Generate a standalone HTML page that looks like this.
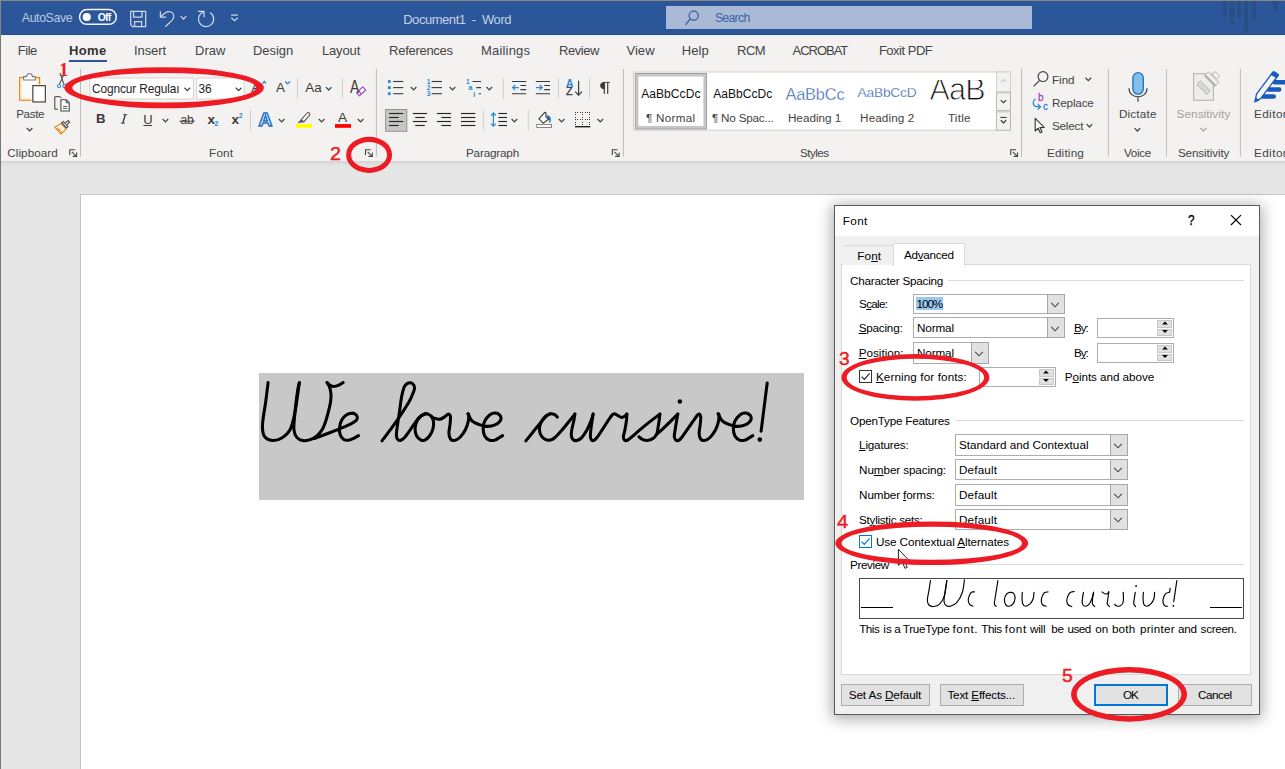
<!DOCTYPE html><html><head><meta charset="utf-8"><title>Word</title><style>html,body{margin:0;padding:0}body{width:1285px;height:769px;position:relative;overflow:hidden;background:#e6e6e6;font-family:"Liberation Sans",sans-serif}u{text-decoration:underline;text-underline-offset:1px;text-decoration-thickness:1px}svg{overflow:visible}</style></head><body>
<div style="position:absolute;left:80px;top:194px;width:1210px;height:580px;background:#fff;border:1px solid #c6c6c6"></div>
<div style="position:absolute;left:259px;top:373px;width:545px;height:127px;background:#c8c8c8"></div>
<svg style="position:absolute;left:0;top:0" width="1285" height="769" viewBox="0 0 1285 769"><g fill="none" stroke="#000" stroke-width="3.05" stroke-linecap="round" stroke-linejoin="round"><path d="M268.10 382.60 C267.68 385.90 266.54 395.39 265.60 402.44 C264.66 409.49 262.69 419.29 262.48 424.91 C262.27 430.52 262.69 433.54 264.35 436.14 C266.02 438.74 269.55 440.20 272.46 440.51 C275.38 440.82 278.91 439.78 281.83 438.01 C284.74 436.24 287.75 434.16 289.94 429.90 C292.12 425.63 293.37 420.27 294.93 412.43 C296.49 404.58 298.57 387.78 299.30 382.85"/><path d="M299.30 382.80 C299.05 383.93 298.38 386.02 297.80 389.60 C297.23 393.18 296.42 399.42 295.85 404.30 C295.28 409.18 294.72 414.68 294.40 418.90 C294.07 423.12 293.50 426.52 293.90 429.60 C294.30 432.68 295.33 435.57 296.80 437.40 C298.27 439.23 300.58 440.18 302.70 440.60 C304.82 441.02 307.23 440.58 309.50 439.90 C311.77 439.22 314.18 438.22 316.30 436.50 C318.42 434.78 320.57 432.37 322.20 429.60 C323.83 426.83 324.97 423.32 326.10 419.90 C327.23 416.48 328.27 412.03 329.00 409.10 C329.73 406.17 330.17 404.73 330.50 402.30 C330.83 399.87 331.17 397.10 331.00 394.50 C330.83 391.90 330.15 388.68 329.50 386.70 C328.85 384.72 327.48 383.28 327.07 382.60"/><path d="M327.07 382.60 C327.56 383.03 328.86 384.55 330.00 385.20 C331.14 385.85 332.43 386.50 333.90 386.50 C335.37 386.50 337.25 385.87 338.80 385.20 C340.35 384.53 342.47 382.95 343.20 382.50"/><path d="M314.40 438.49 C316.83 437.57 324.62 434.66 329.00 432.96 C333.38 431.26 337.12 429.77 340.70 428.29 C344.28 426.81 347.90 425.41 350.50 424.09 C353.10 422.78 355.17 421.54 356.30 420.38 C357.43 419.22 357.45 418.15 357.30 417.14 C357.15 416.13 356.37 414.99 355.40 414.32 C354.43 413.66 352.97 413.07 351.50 413.15 C350.03 413.22 348.23 413.63 346.60 414.75 C344.97 415.88 342.87 417.80 341.70 419.90 C340.53 422.00 339.85 424.86 339.60 427.34 C339.35 429.81 339.52 432.75 340.20 434.77 C340.88 436.79 342.32 438.54 343.70 439.44 C345.08 440.35 346.88 440.36 348.50 440.20 C350.12 440.05 351.73 439.25 353.40 438.49 C355.07 437.73 357.65 436.11 358.50 435.63"/><path d="M382.00 440.86 C383.43 438.94 387.75 433.24 390.60 429.34 C393.45 425.43 396.12 421.86 399.10 417.42 C402.08 412.98 406.38 406.22 408.50 402.69 C410.62 399.15 410.79 398.63 411.80 396.20 C412.81 393.77 414.42 390.20 414.55 388.10 C414.68 386.00 413.58 384.46 412.56 383.60 C411.54 382.75 409.77 382.54 408.44 382.97 C407.11 383.40 405.69 384.00 404.57 386.20 C403.45 388.40 402.48 392.45 401.70 396.20 C400.92 399.95 400.45 404.89 399.90 408.68 C399.35 412.47 398.92 415.38 398.40 418.95 C397.88 422.52 397.13 427.26 396.80 430.10 C396.47 432.94 396.20 434.41 396.40 436.01 C396.60 437.62 397.28 439.01 398.00 439.73 C398.72 440.44 399.60 440.67 400.70 440.30 C401.80 439.93 403.05 439.19 404.60 437.49 C406.15 435.79 408.32 432.44 410.00 430.10 C411.68 427.76 413.13 425.54 414.70 423.43 C416.27 421.31 417.84 418.97 419.40 417.42 C420.96 415.87 422.88 414.76 424.05 414.12 C425.22 413.48 426.01 413.67 426.40 413.58"/><path d="M426.40 413.58 C425.48 413.98 422.52 414.61 420.90 415.99 C419.27 417.38 417.62 419.68 416.65 421.90 C415.68 424.13 415.10 426.99 415.10 429.34 C415.10 431.69 415.68 434.22 416.65 436.01 C417.62 437.81 419.54 439.43 420.90 440.11 C422.26 440.79 423.37 440.79 424.80 440.11 C426.23 439.43 428.13 437.93 429.50 436.01 C430.87 434.09 432.35 431.05 433.00 428.58 C433.65 426.10 433.72 423.24 433.40 421.14 C433.07 419.04 432.08 417.22 431.05 415.99 C430.02 414.76 427.98 414.15 427.20 413.75 C426.42 413.34 426.53 413.61 426.40 413.58"/><path d="M431.50 416.37 C431.81 416.62 432.00 417.34 433.35 417.83 C434.70 418.32 437.75 419.44 439.57 419.32 C441.38 419.20 442.94 417.88 444.24 417.09 C445.55 416.30 446.57 415.03 447.40 414.56 C448.23 414.09 448.69 413.92 449.20 414.28 C449.71 414.64 450.32 415.07 450.47 416.72 C450.62 418.36 450.34 421.42 450.08 424.14 C449.82 426.86 448.85 430.56 448.91 433.04 C448.98 435.51 449.56 437.74 450.47 438.98 C451.38 440.21 452.80 440.72 454.36 440.47 C455.92 440.22 458.00 439.22 459.81 437.49 C461.62 435.75 463.82 432.79 465.25 430.07 C466.68 427.35 467.79 423.70 468.37 421.17 C468.95 418.63 468.81 416.10 468.75 414.87 C468.69 413.63 468.11 413.93 467.98 413.75"/><path d="M467.98 413.75 C468.69 414.98 470.25 419.31 472.26 421.17 C474.27 423.02 477.45 424.01 480.04 424.88 C482.63 425.74 485.33 426.36 487.82 426.36 C490.31 426.36 492.99 425.74 495.00 424.88 C497.01 424.01 498.90 422.40 499.90 421.17 C500.90 419.93 501.22 418.63 501.00 417.46 C500.78 416.29 499.70 414.86 498.60 414.12 C497.50 413.39 495.94 412.88 494.40 413.07 C492.86 413.26 491.00 413.89 489.38 415.24 C487.76 416.59 485.75 418.94 484.71 421.17 C483.67 423.39 483.15 426.12 483.15 428.59 C483.15 431.07 483.67 434.09 484.71 436.01 C485.75 437.93 487.69 439.41 489.38 440.09 C491.06 440.77 492.62 440.83 494.82 440.09 C497.02 439.35 501.31 436.38 502.61 435.64"/><path d="M525.84 440.86 C527.20 439.19 531.34 434.10 534.00 430.82 C536.66 427.53 539.72 423.61 541.80 421.14 C543.88 418.67 545.04 417.22 546.46 415.99 C547.88 414.76 549.05 414.00 550.35 413.75 C551.65 413.49 553.07 413.91 554.24 414.47 C555.41 415.02 556.83 416.65 557.35 417.09"/><path d="M550.35 413.75 C549.44 414.24 546.52 415.11 544.90 416.72 C543.27 418.33 541.51 421.17 540.60 423.40 C539.69 425.62 539.33 427.97 539.46 430.07 C539.59 432.17 540.36 434.40 541.40 436.01 C542.44 437.62 544.21 439.05 545.70 439.73 C547.19 440.41 548.80 440.46 550.35 440.09 C551.90 439.72 553.06 439.16 555.00 437.49 C556.94 435.82 559.53 432.91 562.00 430.07 C564.47 427.23 567.66 423.09 569.80 420.43 C571.94 417.78 574.02 415.18 574.86 414.12"/><path d="M574.86 414.12 C574.67 415.30 574.22 418.51 573.70 421.17 C573.18 423.83 572.14 427.60 571.75 430.07 C571.36 432.55 571.10 434.40 571.36 436.01 C571.62 437.62 572.39 438.98 573.30 439.73 C574.21 440.47 575.43 440.78 576.80 440.47 C578.17 440.16 579.82 439.59 581.50 437.86 C583.18 436.13 585.28 432.98 586.90 430.07 C588.52 427.17 590.16 423.09 591.20 420.43 C592.24 417.78 592.83 415.18 593.15 414.12"/><path d="M593.15 414.12 C592.96 415.30 592.39 418.51 592.00 421.17 C591.61 423.83 591.07 427.47 590.80 430.07 C590.53 432.67 590.27 435.08 590.40 436.75 C590.53 438.42 591.02 439.47 591.60 440.09 C592.18 440.71 593.00 440.90 593.90 440.47 C594.80 440.04 595.57 439.34 597.00 437.49 C598.43 435.63 600.55 432.30 602.50 429.34 C604.45 426.37 607.08 422.10 608.70 419.69 C610.32 417.28 611.24 415.86 612.20 414.87 C613.16 413.88 613.50 413.62 614.45 413.75 C615.40 413.87 616.67 414.99 617.90 415.61 C619.12 416.23 620.63 417.40 621.80 417.46 C622.97 417.52 624.06 416.55 624.90 415.99 C625.74 415.44 626.52 414.44 626.85 414.12"/><path d="M626.85 414.12 C626.79 415.18 626.79 417.78 626.46 420.43 C626.13 423.09 625.42 427.35 624.90 430.07 C624.38 432.79 623.42 435.08 623.35 436.75 C623.28 438.42 623.92 439.47 624.50 440.09 C625.08 440.71 625.75 440.90 626.85 440.47 C627.95 440.04 628.83 439.34 631.10 437.49 C633.37 435.63 637.22 432.06 640.47 429.34 C643.72 426.62 647.36 423.70 650.60 421.17 C653.84 418.63 658.35 415.30 659.90 414.12"/><path d="M659.90 414.12 C659.77 415.18 659.46 418.15 659.14 420.43 C658.82 422.72 658.37 425.63 657.98 427.85 C657.59 430.07 657.65 431.99 656.80 433.78 C655.95 435.57 654.45 437.47 652.90 438.58 C651.35 439.70 649.22 440.34 647.47 440.47 C645.72 440.60 643.83 439.97 642.40 439.35 C640.97 438.73 639.48 437.19 638.90 436.75"/><path d="M657.20 433.78 C658.04 433.04 660.12 431.32 662.26 429.34 C664.40 427.36 667.45 424.44 670.04 421.90 C672.63 419.37 676.51 415.42 677.80 414.12"/><path d="M677.80 414.12 C677.61 415.18 677.10 417.78 676.65 420.43 C676.20 423.09 675.49 427.35 675.10 430.07 C674.71 432.79 674.17 435.08 674.30 436.75 C674.43 438.42 675.25 439.45 675.90 440.09 C676.55 440.73 677.23 441.03 678.20 440.60 C679.17 440.17 679.82 439.86 681.70 437.49 C683.58 435.12 687.93 428.61 689.50 426.38 C691.07 424.15 689.79 425.95 691.10 424.09 C692.41 422.24 696.00 416.91 697.35 415.23 C698.70 413.55 698.65 413.74 699.20 413.99 C699.75 414.24 700.49 415.02 700.67 416.72 C700.85 418.41 700.54 421.42 700.28 424.14 C700.02 426.86 699.04 430.56 699.11 433.04 C699.18 435.51 699.76 437.74 700.67 438.98 C701.58 440.21 703.00 440.72 704.56 440.47 C706.12 440.22 708.19 439.22 710.01 437.49 C711.83 435.75 714.02 432.79 715.45 430.07 C716.88 427.35 717.99 423.70 718.57 421.17 C719.15 418.63 719.01 416.10 718.95 414.87 C718.89 413.63 718.31 413.93 718.18 413.75"/><path d="M718.18 413.75 C718.89 414.98 720.45 419.31 722.46 421.17 C724.47 423.02 727.65 424.01 730.24 424.88 C732.83 425.74 735.53 426.36 738.02 426.36 C740.51 426.36 743.19 425.74 745.20 424.88 C747.21 424.01 749.10 422.40 750.10 421.17 C751.10 419.93 751.42 418.63 751.20 417.46 C750.98 416.29 749.90 414.86 748.80 414.12 C747.70 413.39 746.14 412.88 744.60 413.07 C743.06 413.26 741.19 413.89 739.58 415.24 C737.96 416.59 735.95 418.94 734.91 421.17 C733.87 423.39 733.35 426.12 733.35 428.59 C733.35 431.07 733.87 434.09 734.91 436.01 C735.95 437.93 737.89 439.41 739.58 440.09 C741.26 440.77 742.81 440.83 745.02 440.09 C747.23 439.35 751.51 436.38 752.81 435.64"/><path d="M767.20 383.00 C766.18 391.02 762.12 423.12 761.10 431.15"/></g><circle cx="679.85" cy="401.40" r="2.25" fill="#000"/><circle cx="759.80" cy="439.60" r="2.30" fill="#000"/></svg>
<div style="position:absolute;left:0;top:0;width:1285px;height:35px;background:#2b579a"></div>
<div style="position:absolute;left:1px;top:34px;width:1284px;height:1px;background:#214d93"></div>
<svg style="position:absolute;left:1200px;top:1px" width="85" height="34" viewBox="1200 1 85 34"><g fill="#2b4e86"><rect x="1223" y="1" width="4" height="16"/><rect x="1230" y="1" width="4" height="23"/><rect x="1237" y="1" width="4" height="17"/><rect x="1244" y="1" width="4" height="32"/><rect x="1252" y="1" width="4" height="20"/><path d="M1271 1 L1278 1 L1278 15 Z"/></g></svg>
<span style="position:absolute;left:21.80px;top:12.10px;font:normal normal 12.40px/1 'Liberation Sans', sans-serif;color:#b9c7e0;letter-spacing:-0.418px;white-space:pre;">AutoSave</span>
<svg style="position:absolute;left:76px;top:6px" width="44" height="22" viewBox="76 6 44 22"><rect x="79.55" y="9.6" width="36.75" height="14.75" rx="7.4" fill="none" stroke="#f4f6fb" stroke-width="1.5"/><circle cx="86.75" cy="17" r="4.1" fill="#fff"/></svg>
<span style="position:absolute;left:97.70px;top:12.60px;font:normal bold 10.40px/1 'Liberation Sans', sans-serif;color:#fff;letter-spacing:-0.726px;white-space:pre;">Off</span>
<svg style="position:absolute;left:125px;top:5px" width="120" height="26" viewBox="125 5 120 26" fill="none" stroke="#cbd6e8" stroke-width="1.25">
<path d="M130.7 11.4 H145.7 V26.7 H132.6 L130.7 24.8 Z"/><path d="M133.6 11.4 V17 H142 V11.4"/><path d="M134.6 26.7 V21.6 H141.6 V26.7"/>
<path d="M160.4 11.3 V17.2 H166.1"/><path d="M160.6 17 C164 13 167.6 10.6 171.2 12 C174.4 13.4 174.6 17.6 172 20.4 L165.3 26.8"/>
<path d="M180.7 16.1 L183.5 19 L186.3 16.1"/>
<path d="M197.9 11.4 H204 V17.3"/><path d="M210.03 12.50 A7.60 7.60 0 1 1 203.60 11.80"/>
<path d="M231.1 15.1 H237.9"/><path d="M231.3 17.7 L234.5 20.7 L237.8 17.7"/>
</svg>
<span style="position:absolute;left:403.20px;top:13.20px;font:normal normal 13.00px/1 'Liberation Sans', sans-serif;color:#c5d1e6;letter-spacing:-0.457px;white-space:pre;">Document1  -  Word</span>
<div style="position:absolute;left:665.6px;top:6.4px;width:366.6px;height:23px;background:#a8bad6"></div>
<svg style="position:absolute;left:683px;top:8px" width="18" height="19" viewBox="683 8 18 19" fill="none" stroke="#3b63a5" stroke-width="1.3"><circle cx="693.7" cy="15.6" r="4.6"/><path d="M690.5 19 L685.3 24.8"/></svg>
<span style="position:absolute;left:714.90px;top:11.79px;font:normal normal 12.30px/1 'Liberation Sans', sans-serif;color:#3b63a5;letter-spacing:-0.722px;white-space:pre;">Search</span>
<div style="position:absolute;left:0;top:35px;width:1285px;height:126px;background:#f3f2f1"></div>
<div style="position:absolute;left:0;top:161px;width:1285px;height:6px;background:linear-gradient(#d2d2d2,#dedede 40%,#e6e6e6)"></div>
<span style="position:absolute;left:17.70px;top:44.20px;font:normal normal 13.00px/1 'Liberation Sans', sans-serif;color:#444;letter-spacing:-0.444px;white-space:pre;">File</span>
<span style="position:absolute;left:134.00px;top:44.20px;font:normal normal 13.00px/1 'Liberation Sans', sans-serif;color:#444;letter-spacing:-0.076px;white-space:pre;">Insert</span>
<span style="position:absolute;left:195.00px;top:44.20px;font:normal normal 13.00px/1 'Liberation Sans', sans-serif;color:#444;letter-spacing:0.016px;white-space:pre;">Draw</span>
<span style="position:absolute;left:253.00px;top:44.20px;font:normal normal 13.00px/1 'Liberation Sans', sans-serif;color:#444;letter-spacing:-0.067px;white-space:pre;">Design</span>
<span style="position:absolute;left:321.90px;top:44.20px;font:normal normal 13.00px/1 'Liberation Sans', sans-serif;color:#444;letter-spacing:-0.118px;white-space:pre;">Layout</span>
<span style="position:absolute;left:389.10px;top:44.20px;font:normal normal 13.00px/1 'Liberation Sans', sans-serif;color:#444;letter-spacing:-0.283px;white-space:pre;">References</span>
<span style="position:absolute;left:481.00px;top:44.20px;font:normal normal 13.00px/1 'Liberation Sans', sans-serif;color:#444;letter-spacing:0.188px;white-space:pre;">Mailings</span>
<span style="position:absolute;left:559.00px;top:44.20px;font:normal normal 13.00px/1 'Liberation Sans', sans-serif;color:#444;letter-spacing:-0.423px;white-space:pre;">Review</span>
<span style="position:absolute;left:626.40px;top:44.20px;font:normal normal 13.00px/1 'Liberation Sans', sans-serif;color:#444;letter-spacing:0.071px;white-space:pre;">View</span>
<span style="position:absolute;left:681.70px;top:44.20px;font:normal normal 13.00px/1 'Liberation Sans', sans-serif;color:#444;letter-spacing:0.129px;white-space:pre;">Help</span>
<span style="position:absolute;left:737.00px;top:44.20px;font:normal normal 13.00px/1 'Liberation Sans', sans-serif;color:#444;letter-spacing:-0.484px;white-space:pre;">RCM</span>
<span style="position:absolute;left:792.50px;top:44.20px;font:normal normal 13.00px/1 'Liberation Sans', sans-serif;color:#444;letter-spacing:-1.014px;white-space:pre;">ACROBAT</span>
<span style="position:absolute;left:878.90px;top:44.20px;font:normal normal 13.00px/1 'Liberation Sans', sans-serif;color:#444;letter-spacing:-0.494px;white-space:pre;">Foxit PDF</span>
<span style="position:absolute;left:69.00px;top:44.20px;font:normal bold 13.00px/1 'Liberation Sans', sans-serif;color:#333;letter-spacing:0.336px;white-space:pre;">Home</span>
<div style="position:absolute;left:69.2px;top:59.6px;width:37.7px;height:2.9px;background:#2b579a"></div>
<span style="position:absolute;left:7.30px;top:146.70px;font:normal normal 11.70px/1 'Liberation Sans', sans-serif;color:#444;letter-spacing:0.055px;white-space:pre;">Clipboard</span>
<span style="position:absolute;left:209.10px;top:146.70px;font:normal normal 11.70px/1 'Liberation Sans', sans-serif;color:#444;letter-spacing:0.174px;white-space:pre;">Font</span>
<span style="position:absolute;left:466.00px;top:146.70px;font:normal normal 11.70px/1 'Liberation Sans', sans-serif;color:#444;letter-spacing:-0.176px;white-space:pre;">Paragraph</span>
<span style="position:absolute;left:799.90px;top:146.70px;font:normal normal 11.70px/1 'Liberation Sans', sans-serif;color:#444;letter-spacing:-0.514px;white-space:pre;">Styles</span>
<span style="position:absolute;left:1046.90px;top:146.70px;font:normal normal 11.70px/1 'Liberation Sans', sans-serif;color:#444;letter-spacing:0.208px;white-space:pre;">Editing</span>
<span style="position:absolute;left:1123.90px;top:146.70px;font:normal normal 11.70px/1 'Liberation Sans', sans-serif;color:#444;letter-spacing:-0.332px;white-space:pre;">Voice</span>
<span style="position:absolute;left:1177.90px;top:146.70px;font:normal normal 11.70px/1 'Liberation Sans', sans-serif;color:#444;letter-spacing:-0.107px;white-space:pre;">Sensitivity</span>
<span style="position:absolute;left:1253.90px;top:146.70px;font:normal normal 11.70px/1 'Liberation Sans', sans-serif;color:#444;letter-spacing:0.464px;white-space:pre;">Editor</span>
<svg style="position:absolute;left:0;top:0" width="1285" height="170" viewBox="0 0 1285 170"><path d="M80.5 69 V156.8" stroke="#bdbcbb" stroke-width="1"/>
<path d="M376.4 69 V156.8" stroke="#bdbcbb" stroke-width="1"/>
<path d="M623.4 69 V156.8" stroke="#bdbcbb" stroke-width="1"/>
<path d="M1021.5 69 V156.8" stroke="#bdbcbb" stroke-width="1"/>
<path d="M1108.4 69 V156.8" stroke="#bdbcbb" stroke-width="1"/>
<path d="M1166.4 69 V156.8" stroke="#bdbcbb" stroke-width="1"/>
<path d="M1240.4 69 V156.8" stroke="#bdbcbb" stroke-width="1"/>
<path d="M297.5 78.3 V98.6" stroke="#d0cfce" stroke-width="1"/>
<path d="M342.4 78.3 V98.6" stroke="#d0cfce" stroke-width="1"/>
<path d="M503.4 78.3 V98.6" stroke="#d0cfce" stroke-width="1"/>
<path d="M558.4 78.3 V98.6" stroke="#d0cfce" stroke-width="1"/>
<path d="M589.5 78.3 V98.6" stroke="#d0cfce" stroke-width="1"/>
<path d="M250.5 110.2 V130.6" stroke="#d0cfce" stroke-width="1"/>
<path d="M483.4 110.2 V130.6" stroke="#d0cfce" stroke-width="1"/>
<path d="M528.4 110.2 V130.6" stroke="#d0cfce" stroke-width="1"/>
<g fill="none" stroke="#444" stroke-width="1.1"><path d="M69.80 154.90 V149.80 H75.10"/><path d="M71.90 151.90 L76.50 156.30"/><path d="M76.60 152.50 V156.40 H72.70"/></g>
<g fill="none" stroke="#444" stroke-width="1.1"><path d="M365.50 154.90 V149.80 H370.80"/><path d="M367.60 151.90 L372.20 156.30"/><path d="M372.30 152.50 V156.40 H368.40"/></g>
<g fill="none" stroke="#444" stroke-width="1.1"><path d="M612.30 154.90 V149.80 H617.60"/><path d="M614.40 151.90 L619.00 156.30"/><path d="M619.10 152.50 V156.40 H615.20"/></g>
<g fill="none" stroke="#444" stroke-width="1.1"><path d="M1010.70 154.90 V149.80 H1016.00"/><path d="M1012.80 151.90 L1017.40 156.30"/><path d="M1017.50 152.50 V156.40 H1013.60"/></g>
<rect x="19.7" y="77.6" width="19.8" height="22.6" fill="#fbfaf8" stroke="#e08a1e" stroke-width="1.3"/>
<rect x="21" y="78.9" width="17.2" height="20" fill="none" stroke="#fbdfae" stroke-width="1.2"/>
<path d="M23.6 80 V76.6 H26.6 C26.8 72.4 32.2 72.4 32.4 76.6 H35.3 V80 Z" fill="#fff" stroke="#7c7c7c" stroke-width="1.1"/>
<rect x="31.4" y="84.2" width="15.4" height="19.2" fill="#f8f7f6"/>
<rect x="32.85" y="85.65" width="12.5" height="16.3" fill="#fff" stroke="#3a3a3a" stroke-width="1.15"/>
<path d="M26.80 127.95 L29.60 130.85 L32.40 127.95" fill="none" stroke="#444" stroke-width="1.25"/>
<path d="M59.9 73 L64 84.2 M64.6 73 L59.4 84.2" stroke="#555" stroke-width="1.1" fill="none"/>
<circle cx="59" cy="86.1" r="1.55" fill="#fff" stroke="#2b88d8" stroke-width="1.1"/><circle cx="64.4" cy="86.1" r="1.55" fill="#fff" stroke="#2b88d8" stroke-width="1.1"/>
<path d="M58 109.2 H54.8 V96.7 H60.2 L61.6 98.2" fill="none" stroke="#3b3a39" stroke-width="1"/>
<path d="M60.9 99.7 H66.4 L69.2 102.6 V111 H60.9 Z" fill="#fff" stroke="#444" stroke-width="1.1"/><path d="M66.2 99.9 V102.8 H69" fill="none" stroke="#444" stroke-width="1"/><path d="M63 106.4 H67.2 M63 108.4 H67.2" stroke="#444" stroke-width="0.9"/>
<path d="M54.8 127.2 L61.2 123.4 L66 129.2 L61 134.2 Z" fill="#fdf1e0" stroke="#e08a1e" stroke-width="1.2" stroke-linejoin="round"/><path d="M57 128.6 C59 129 61.4 131 61.2 133" fill="none" stroke="#e9a04a" stroke-width="1.6"/>
<path d="M61.8 122.6 L63.4 121.4 L67.9 126.6 L66.4 127.9 Z" fill="#fff" stroke="#444" stroke-width="1.1"/><path d="M65.2 123.2 L68.2 120.5 L69.6 122.1 L66.7 124.8" fill="#fff" stroke="#444" stroke-width="1.1"/>
<rect x="90" y="78" width="103.5" height="21" fill="#fff" stroke="#d6d4d2" stroke-width="1"/>
<rect x="196.7" y="78" width="47.4" height="21" fill="#fff" stroke="#d6d4d2" stroke-width="1"/>
<path d="M184.50 87.75 L187.30 90.65 L190.10 87.75" fill="none" stroke="#444" stroke-width="1.25"/>
<path d="M235.80 87.75 L238.60 90.65 L241.40 87.75" fill="none" stroke="#444" stroke-width="1.25"/>
<path d="M162.60 118.95 L165.40 121.85 L168.20 118.95" fill="none" stroke="#444" stroke-width="1.25"/>
<path d="M325.90 87.15 L328.70 90.05 L331.50 87.15" fill="none" stroke="#444" stroke-width="1.25"/>
<path d="M278.90 118.95 L281.70 121.85 L284.50 118.95" fill="none" stroke="#444" stroke-width="1.25"/>
<path d="M318.80 118.95 L321.60 121.85 L324.40 118.95" fill="none" stroke="#444" stroke-width="1.25"/>
<path d="M357.80 118.95 L360.60 121.85 L363.40 118.95" fill="none" stroke="#444" stroke-width="1.25"/>
<path d="M262.6 83.6 L264.3 81.3 L266 83.6" fill="none" stroke="#2b88d8" stroke-width="1.2"/>
<path d="M285.2 81.5 L287.6 83.8 L290 81.5" fill="none" stroke="#2b88d8" stroke-width="1.2"/>
<path d="M123.3 114.7 H127.2 M120.9 123.1 H124.8" stroke="#3b3a39" stroke-width="1"/><path d="M125.3 114.7 L122.8 123.1" stroke="#3b3a39" stroke-width="1.35"/>
<path d="M143.4 125.5 H152" stroke="#444" stroke-width="1.1"/>
<path d="M179.4 121.2 H194.8" stroke="#444" stroke-width="1"/>
<path d="M356.5 92.7 L362.8 86.9 L365.7 90.2 L359.4 95.8 Z" fill="#fff" stroke="#a349c0" stroke-width="1.2" stroke-linejoin="round"/><path d="M358.7 90.7 L361.5 94" stroke="#a349c0" stroke-width="1.1"/>
<path d="M301.2 119.6 L307.2 113 C308.4 111.9 310.6 113.8 309.6 115.2 L303.8 121.8 Z" fill="#fff" stroke="#555" stroke-width="1.1" stroke-linejoin="round"/><path d="M301.2 119.6 L303.8 121.8 L298.2 122.7 Z" fill="#555" stroke="#555" stroke-width="0.8"/>
<rect x="295.9" y="124.1" width="16.1" height="3.7" fill="#ffff00"/>
<rect x="335" y="124.1" width="16" height="3.7" fill="#ff0000"/>
<rect x="387.9" y="80.1" width="2.8" height="2.8" fill="#2b88d8"/>
<path d="M393.2 81.5 H403.3" stroke="#3b3a39" stroke-width="1.1"/>
<path d="M431.6 81.5 H442" stroke="#3b3a39" stroke-width="1.1"/>
<rect x="387.9" y="86.2" width="2.8" height="2.8" fill="#2b88d8"/>
<path d="M393.2 87.6 H403.3" stroke="#3b3a39" stroke-width="1.1"/>
<path d="M431.6 87.6 H442" stroke="#3b3a39" stroke-width="1.1"/>
<rect x="387.9" y="92.3" width="2.8" height="2.8" fill="#2b88d8"/>
<path d="M393.2 93.7 H403.3" stroke="#3b3a39" stroke-width="1.1"/>
<path d="M431.6 93.7 H442" stroke="#3b3a39" stroke-width="1.1"/>
<path d="M410.80 86.95 L413.60 89.85 L416.40 86.95" fill="none" stroke="#444" stroke-width="1.25"/>
<path d="M449.70 86.95 L452.50 89.85 L455.30 86.95" fill="none" stroke="#444" stroke-width="1.25"/>
<path d="M486.50 86.95 L489.30 89.85 L492.10 86.95" fill="none" stroke="#444" stroke-width="1.25"/>
<path d="M472.4 81.5 H481 M476.3 87.6 H481 M478.6 93.7 H481" stroke="#3b3a39" stroke-width="1.1"/>
<path d="M512.0 81.5 H526.2 M520.4 85.5 H526.2 M520.4 89.6 H526.2 M512.0 93.7 H526.2" stroke="#3b3a39" stroke-width="1.1"/>
<path d="M535.8 81.5 H550.0 M544.2 85.5 H550.0 M544.2 89.6 H550.0 M535.8 93.7 H550.0" stroke="#3b3a39" stroke-width="1.1"/>
<path d="M518.8 87.6 H512.6 M515.2 85 L512.6 87.6 L515.2 90.2" fill="none" stroke="#2b88d8" stroke-width="1.2"/>
<path d="M536 87.6 H542.2 M539.6 85 L542.2 87.6 L539.6 90.2" fill="none" stroke="#2b88d8" stroke-width="1.2"/>
<path d="M578.6 80.8 V95 M575.2 91.6 L578.6 95.2 L582 91.6" fill="none" stroke="#3b3a39" stroke-width="1.2"/>
<path d="M604.8 82 C598.6 81.6 598.6 89.6 604.8 89.3 Z" fill="#3b3a39"/><path d="M604.3 82 V94 M607.7 82 V94" stroke="#3b3a39" stroke-width="1.15"/><path d="M603.5 82.4 H610.1" stroke="#3b3a39" stroke-width="0.9"/>
<rect x="385.6" y="109.5" width="21.2" height="21.8" fill="#c8c6c4" stroke="#979593" stroke-width="1"/>
<path d="M389.0 113.5 H403.2" stroke="#262626" stroke-width="1.15"/><path d="M389.0 117.5 H398.8" stroke="#262626" stroke-width="1.15"/><path d="M389.0 121.5 H403.2" stroke="#262626" stroke-width="1.15"/><path d="M389.0 125.5 H398.8" stroke="#262626" stroke-width="1.15"/>
<path d="M412.8 113.5 H427.1" stroke="#262626" stroke-width="1.15"/><path d="M415.2 117.5 H424.8" stroke="#262626" stroke-width="1.15"/><path d="M412.8 121.5 H427.1" stroke="#262626" stroke-width="1.15"/><path d="M415.2 125.5 H424.8" stroke="#262626" stroke-width="1.15"/>
<path d="M436.9 113.5 H451.1" stroke="#262626" stroke-width="1.15"/><path d="M441.3 117.5 H451.1" stroke="#262626" stroke-width="1.15"/><path d="M436.9 121.5 H451.1" stroke="#262626" stroke-width="1.15"/><path d="M441.3 125.5 H451.1" stroke="#262626" stroke-width="1.15"/>
<path d="M461.0 113.5 H475.4" stroke="#262626" stroke-width="1.15"/><path d="M461.0 117.5 H475.4" stroke="#262626" stroke-width="1.15"/><path d="M461.0 121.5 H475.4" stroke="#262626" stroke-width="1.15"/><path d="M461.0 125.5 H475.4" stroke="#262626" stroke-width="1.15"/>
<path d="M498.4 113.5 H507.0" stroke="#262626" stroke-width="1.15"/><path d="M498.4 117.5 H507.0" stroke="#262626" stroke-width="1.15"/><path d="M498.4 121.5 H507.0" stroke="#262626" stroke-width="1.15"/><path d="M498.4 125.5 H507.0" stroke="#262626" stroke-width="1.15"/>
<path d="M493.4 113 V126.2 M491 115.6 L493.4 113 L495.8 115.6 M491 123.6 L493.4 126.2 L495.8 123.6" fill="none" stroke="#2b88d8" stroke-width="1.2"/>
<path d="M511.60 118.95 L514.40 121.85 L517.20 118.95" fill="none" stroke="#444" stroke-width="1.25"/>
<path d="M558.80 118.95 L561.60 121.85 L564.40 118.95" fill="none" stroke="#444" stroke-width="1.25"/>
<path d="M597.50 118.95 L600.30 121.85 L603.10 118.95" fill="none" stroke="#444" stroke-width="1.25"/>
<path d="M538.95 118.8 L544.3 112.8 Q545.3 111.9 545.95 113.1 V116.85 L548.6 119.2 L543.2 123.1 Z" fill="#fff" stroke="#3b3a39" stroke-width="1.15" stroke-linejoin="round"/>
<path d="M547.5 115.6 C550.2 116 551.6 119.2 549.7 122.6 C549.7 120.2 549 118.2 547 117.3 Z" fill="#1e6fc1" stroke="#1e6fc1" stroke-width="0.6" stroke-linejoin="round"/>
<rect x="536.7" y="124.5" width="14.8" height="3" fill="#fff" stroke="#8a8886" stroke-width="1"/>
<rect x="585.00" y="119.00" width="1" height="1" fill="#3b3a39"/><rect x="587.00" y="119.00" width="1" height="1" fill="#3b3a39"/><rect x="575.00" y="114.00" width="1" height="1" fill="#3b3a39"/><rect x="575.00" y="117.00" width="1" height="1" fill="#3b3a39"/><rect x="589.00" y="119.00" width="1" height="1" fill="#3b3a39"/><rect x="589.00" y="122.00" width="1" height="1" fill="#3b3a39"/><rect x="580.00" y="119.00" width="1" height="1" fill="#3b3a39"/><rect x="582.00" y="119.00" width="1" height="1" fill="#3b3a39"/><rect x="585.00" y="112.00" width="1" height="1" fill="#3b3a39"/><rect x="582.00" y="122.00" width="1" height="1" fill="#3b3a39"/><rect x="587.00" y="112.00" width="1" height="1" fill="#3b3a39"/><rect x="575.00" y="119.00" width="1" height="1" fill="#3b3a39"/><rect x="589.00" y="112.00" width="1" height="1" fill="#3b3a39"/><rect x="575.00" y="122.00" width="1" height="1" fill="#3b3a39"/><rect x="580.00" y="112.00" width="1" height="1" fill="#3b3a39"/><rect x="577.00" y="119.00" width="1" height="1" fill="#3b3a39"/><rect x="589.00" y="124.00" width="1" height="1" fill="#3b3a39"/><rect x="582.00" y="112.00" width="1" height="1" fill="#3b3a39"/><rect x="582.00" y="124.00" width="1" height="1" fill="#3b3a39"/><rect x="575.00" y="112.00" width="1" height="1" fill="#3b3a39"/><rect x="577.00" y="112.00" width="1" height="1" fill="#3b3a39"/><rect x="589.00" y="114.00" width="1" height="1" fill="#3b3a39"/><rect x="589.00" y="117.00" width="1" height="1" fill="#3b3a39"/><rect x="575.00" y="124.00" width="1" height="1" fill="#3b3a39"/><rect x="582.00" y="114.00" width="1" height="1" fill="#3b3a39"/><rect x="582.00" y="117.00" width="1" height="1" fill="#3b3a39"/>
<path d="M575 126.7 H590.3" stroke="#1f1f1f" stroke-width="1.4"/>
<rect x="633.5" y="72" width="377" height="58.2" fill="#fff" stroke="#d2d0ce" stroke-width="1"/>
<rect x="636.8" y="74.9" width="68.2" height="52.6" fill="#fff" stroke="#c8c6c4" stroke-width="3.2"/><rect x="635.3" y="73.4" width="71.2" height="55.6" fill="none" stroke="#9d9b99" stroke-width="0.9"/>
<rect x="996.5" y="72" width="14" height="19.6" fill="#f3f2f1" stroke="#d2d0ce" stroke-width="1"/><rect x="996.5" y="92.8" width="14" height="17.6" fill="#f3f2f1" stroke="#bab8b6" stroke-width="1"/><rect x="996.5" y="111.8" width="14" height="18.4" fill="#f3f2f1" stroke="#bab8b6" stroke-width="1"/>
<path d="M1000.90 82.10 L1003.50 79.50 L1006.10 82.10" fill="none" stroke="#c8c6c4" stroke-width="1.10"/>
<path d="M1000.80 100.05 L1003.50 102.75 L1006.20 100.05" fill="none" stroke="#333" stroke-width="1.10"/>
<path d="M1000.80 120.25 L1003.50 122.95 L1006.20 120.25" fill="none" stroke="#333" stroke-width="1.10"/>
<path d="M1000.4 117.4 H1006.6" stroke="#333" stroke-width="1"/>
<circle cx="1043" cy="76.6" r="4.9" fill="none" stroke="#444" stroke-width="1.2"/><path d="M1039.6 80.4 L1033.6 86.4" stroke="#444" stroke-width="1.3"/>
<path d="M1085.50 77.75 L1088.30 80.65 L1091.10 77.75" fill="none" stroke="#444" stroke-width="1.25"/>
<path d="M1086.60 124.15 L1089.40 127.05 L1092.20 124.15" fill="none" stroke="#444" stroke-width="1.25"/>
<path d="M1035.2 118.4 V131 L1038.2 128.2 L1040.2 132.8 L1042 132 L1040 127.6 L1044.2 127.4 Z" fill="#fff" stroke="#333" stroke-width="1.1" stroke-linejoin="round"/>
<path d="M1035.6 98.7 C1032.4 100.4 1032.4 105.4 1035.8 106.6 L1040.3 106.7 M1037.7 103.9 L1040.5 106.7 L1037.7 109.5" fill="none" stroke="#2b88d8" stroke-width="1.25"/>
<rect x="1132.9" y="72.6" width="10.4" height="21.6" rx="5.2" fill="#83beec" stroke="#1e6fc1" stroke-width="1.3"/>
<path d="M1129 88.2 C1129 99.6 1147 99.6 1147 88.2 M1138 96.8 V101.8" fill="none" stroke="#444" stroke-width="1.2"/>
<path d="M1134.60 128.15 L1137.40 131.05 L1140.20 128.15" fill="none" stroke="#444" stroke-width="1.25"/>
<rect x="1193.6" y="73.7" width="19.8" height="26.6" fill="#eeeded" stroke="#b9b8b7" stroke-width="1.2"/>
<rect x="1201.30" y="80.95" width="4.60" height="13.40" fill="#eeeded" stroke="#b9b8b7" stroke-width="1.10" transform="rotate(-45 1203.60 87.65)" />
<rect x="1202.90" y="82.95" width="1.40" height="9.40" fill="#f6f5f4" stroke="#b9b8b7" stroke-width="0.80" transform="rotate(-45 1203.60 87.65)" />
<rect x="1209.16" y="71.57" width="5.20" height="14.80" fill="#f0efee" stroke="#c4c3c2" stroke-width="1.00" transform="rotate(-45 1211.76 78.97)" />
<rect x="1209.05" y="73.20" width="2.10" height="14.80" fill="#adacab" stroke="none" stroke-width="0.00" transform="rotate(-45 1210.10 80.60)" />
<rect x="1213.85" y="71.90" width="3.90" height="6.60" fill="#f6f5f4" stroke="#c4c3c2" stroke-width="1.00" transform="rotate(-45 1215.80 75.20)" />
<path d="M1200.40 127.90 L1203.40 130.90 L1206.40 127.90" fill="none" stroke="#a19f9d" stroke-width="1.20"/>
<path d="M1274.8 82.3 H1290 M1268.4 89.5 H1279.2 M1262.6 96.4 H1273.8" stroke="#185abd" stroke-width="4.5" stroke-linecap="round"/>
<path d="M1254.9 101.8 L1256.5 94.2 L1272.6 72.6 Q1273.5 71.4 1274.8 72.3 L1278.4 75 L1260.6 98.6 Z" fill="#f7f6f5" stroke="#185abd" stroke-width="1.3" stroke-linejoin="round"/>
<path d="M1271.3 74.4 L1272.6 72.6 Q1273.5 71.4 1274.8 72.3 L1278.4 75 L1276.4 77.6 Z" fill="#185abd" stroke="#185abd" stroke-width="1.2" stroke-linejoin="round"/>
<path d="M1254.8 101.9 L1256.1 98 L1258.7 100.3 Z" fill="#185abd" stroke="#185abd" stroke-width="0.8" stroke-linejoin="round"/></svg>
<span style="position:absolute;left:16.20px;top:107.80px;font:normal normal 11.70px/1 'Liberation Sans', sans-serif;color:#444;letter-spacing:-0.376px;white-space:pre;">Paste</span>
<span style="position:absolute;left:92.10px;top:83.53px;font:normal normal 11.90px/1 'Liberation Sans', sans-serif;color:#1d1d1d;letter-spacing:-0.127px;white-space:pre;">Cogncur Regulaı</span>
<span style="position:absolute;left:198.50px;top:83.53px;font:normal normal 11.90px/1 'Liberation Sans', sans-serif;color:#1d1d1d;letter-spacing:-0.156px;white-space:pre;">36</span>
<span style="position:absolute;left:96.10px;top:112.43px;font:normal bold 13.20px/1 'Liberation Sans', sans-serif;color:#3b3a39;letter-spacing:-1.131px;white-space:pre;">B</span>
<span style="position:absolute;left:143.20px;top:112.60px;font:normal normal 13.00px/1 'Liberation Sans', sans-serif;color:#3b3a39;letter-spacing:-0.891px;white-space:pre;">U</span>
<span style="position:absolute;left:180.50px;top:114.44px;font:normal normal 12.00px/1 'Liberation Sans', sans-serif;color:#3b3a39;letter-spacing:-0.240px;white-space:pre;">ab</span>
<span style="position:absolute;left:207.50px;top:112.87px;font:normal bold 13.50px/1 'Liberation Sans', sans-serif;color:#3b3a39;letter-spacing:-0.116px;white-space:pre;">x</span>
<span style="position:absolute;left:214.45px;top:121.44px;font:normal bold 6.80px/1 'Liberation Sans', sans-serif;color:#2b88d8;letter-spacing:0.119px;white-space:pre;">2</span>
<span style="position:absolute;left:231.50px;top:112.87px;font:normal bold 13.50px/1 'Liberation Sans', sans-serif;color:#3b3a39;letter-spacing:-0.116px;white-space:pre;">x</span>
<span style="position:absolute;left:238.65px;top:112.84px;font:normal bold 6.80px/1 'Liberation Sans', sans-serif;color:#2b88d8;letter-spacing:0.119px;white-space:pre;">2</span>
<span style="position:absolute;left:251.30px;top:81.19px;font:normal normal 13.60px/1 'Liberation Sans', sans-serif;color:#3b3a39;letter-spacing:0.722px;white-space:pre;">A</span>
<span style="position:absolute;left:276.10px;top:81.36px;font:normal normal 13.40px/1 'Liberation Sans', sans-serif;color:#3b3a39;letter-spacing:0.962px;white-space:pre;">A</span>
<span style="position:absolute;left:305.20px;top:81.36px;font:normal normal 13.40px/1 'Liberation Sans', sans-serif;color:#3b3a39;letter-spacing:0.206px;white-space:pre;">Aa</span>
<span style="position:absolute;left:350.10px;top:79.10px;font:normal normal 17.60px/1 'Liberation Sans', sans-serif;color:#3b3a39;letter-spacing:0.000px;white-space:pre;transform:scaleX(0.7915);transform-origin:0 0;">A</span>
<span style="position:absolute;left:258.40px;top:110.12px;font:normal bold 19.00px/1 'Liberation Sans', sans-serif;color:#fff;letter-spacing:1.966px;white-space:pre;-webkit-text-stroke:1.5px #1e73c8;">A</span>
<span style="position:absolute;left:338.10px;top:110.70px;font:normal normal 13.70px/1 'Liberation Sans', sans-serif;color:#3b3a39;letter-spacing:1.459px;white-space:pre;">A</span>
<span style="position:absolute;left:426.70px;top:78.61px;font:normal bold 6.60px/1 'Liberation Sans', sans-serif;color:#2b88d8;letter-spacing:-0.472px;white-space:pre;">1</span>
<span style="position:absolute;left:426.70px;top:84.71px;font:normal bold 6.60px/1 'Liberation Sans', sans-serif;color:#2b88d8;letter-spacing:-0.472px;white-space:pre;">2</span>
<span style="position:absolute;left:426.70px;top:90.81px;font:normal bold 6.60px/1 'Liberation Sans', sans-serif;color:#2b88d8;letter-spacing:-0.472px;white-space:pre;">3</span>
<span style="position:absolute;left:465.90px;top:78.61px;font:normal bold 6.60px/1 'Liberation Sans', sans-serif;color:#2b88d8;letter-spacing:-0.672px;white-space:pre;">1</span>
<span style="position:absolute;left:468.50px;top:84.47px;font:normal bold 7.00px/1 'Liberation Sans', sans-serif;color:#2b88d8;letter-spacing:-0.306px;white-space:pre;">a</span>
<span style="position:absolute;left:473.30px;top:90.67px;font:normal bold 7.00px/1 'Liberation Sans', sans-serif;color:#2b88d8;letter-spacing:-0.353px;white-space:pre;">i</span>
<span style="position:absolute;left:565.80px;top:77.93px;font:normal bold 10.60px/1 'Liberation Sans', sans-serif;color:#2488d8;letter-spacing:0.000px;white-space:pre;transform:scaleX(0.9665);transform-origin:0 0;">A</span>
<span style="position:absolute;left:565.70px;top:87.47px;font:normal normal 10.20px/1 'Liberation Sans', sans-serif;color:#3b3a39;letter-spacing:0.000px;white-space:pre;-webkit-text-stroke:0.3px #3b3a39;transform:scaleX(1.0586);transform-origin:0 0;">Z</span>
<span style="position:absolute;left:641.20px;top:87.64px;font:normal normal 12.00px/1 'Liberation Sans', sans-serif;color:#111;letter-spacing:0.082px;white-space:pre;">AaBbCcDc</span>
<span style="position:absolute;left:645.90px;top:111.70px;font:normal normal 11.70px/1 'Liberation Sans', sans-serif;color:#444;letter-spacing:0.280px;white-space:pre;">¶ Normal</span>
<span style="position:absolute;left:713.20px;top:87.64px;font:normal normal 12.00px/1 'Liberation Sans', sans-serif;color:#111;letter-spacing:0.068px;white-space:pre;">AaBbCcDc</span>
<span style="position:absolute;left:712.00px;top:111.70px;font:normal normal 11.70px/1 'Liberation Sans', sans-serif;color:#444;letter-spacing:-0.208px;white-space:pre;">¶ No Spac...</span>
<span style="position:absolute;left:785.40px;top:85.52px;font:normal normal 16.40px/1 'Liberation Sans', sans-serif;color:#2f5fad;letter-spacing:-0.189px;white-space:pre;-webkit-text-stroke:0.35px #fff;">AaBbCc</span>
<span style="position:absolute;left:787.90px;top:111.70px;font:normal normal 11.70px/1 'Liberation Sans', sans-serif;color:#444;letter-spacing:0.024px;white-space:pre;">Heading 1</span>
<span style="position:absolute;left:857.50px;top:85.90px;font:normal normal 13.70px/1 'Liberation Sans', sans-serif;color:#2f5fad;letter-spacing:-0.155px;white-space:pre;-webkit-text-stroke:0.25px #fff;">AaBbCcD</span>
<span style="position:absolute;left:860.10px;top:111.70px;font:normal normal 11.70px/1 'Liberation Sans', sans-serif;color:#444;letter-spacing:0.106px;white-space:pre;">Heading 2</span>
<div style="position:absolute;left:925px;top:80px;width:66px;height:24px;overflow:hidden">
<span style="position:absolute;left:4.50px;top:-6.42px;font:normal normal 30.50px/1 'Liberation Sans', sans-serif;color:#111;letter-spacing:-0.822px;white-space:pre;-webkit-text-stroke:0.9px #fff;">AaB</span>
</div>
<span style="position:absolute;left:947.90px;top:111.70px;font:normal normal 11.70px/1 'Liberation Sans', sans-serif;color:#444;letter-spacing:0.254px;white-space:pre;">Title</span>
<span style="position:absolute;left:1052.00px;top:73.60px;font:normal normal 11.70px/1 'Liberation Sans', sans-serif;color:#444;letter-spacing:-0.043px;white-space:pre;">Find</span>
<span style="position:absolute;left:1052.00px;top:96.90px;font:normal normal 11.70px/1 'Liberation Sans', sans-serif;color:#444;letter-spacing:-0.168px;white-space:pre;">Replace</span>
<span style="position:absolute;left:1052.00px;top:119.80px;font:normal normal 11.70px/1 'Liberation Sans', sans-serif;color:#444;letter-spacing:-0.215px;white-space:pre;">Select</span>
<span style="position:absolute;left:1038.45px;top:92.90px;font:normal normal 10.40px/1 'Liberation Sans', sans-serif;color:#a349c0;letter-spacing:0.000px;white-space:pre;-webkit-text-stroke:0.3px #a349c0;transform:scaleX(0.9686);transform-origin:0 0;">b</span>
<span style="position:absolute;left:1042.65px;top:100.63px;font:normal normal 10.60px/1 'Liberation Sans', sans-serif;color:#2b88d8;letter-spacing:0.000px;white-space:pre;-webkit-text-stroke:0.3px #2b88d8;transform:scaleX(0.9062);transform-origin:0 0;">c</span>
<span style="position:absolute;left:1118.90px;top:107.80px;font:normal normal 11.70px/1 'Liberation Sans', sans-serif;color:#444;letter-spacing:0.186px;white-space:pre;">Dictate</span>
<span style="position:absolute;left:1176.50px;top:107.80px;font:normal normal 11.70px/1 'Liberation Sans', sans-serif;color:#a19f9d;letter-spacing:0.112px;white-space:pre;">Sensitivity</span>
<span style="position:absolute;left:1253.90px;top:107.80px;font:normal normal 11.70px/1 'Liberation Sans', sans-serif;color:#444;letter-spacing:0.464px;white-space:pre;">Editor</span>
<div style="position:absolute;left:834px;top:205px;width:426px;height:510px;box-sizing:border-box;background:#f0f0f0;border:1px solid #5a5a5a;box-shadow:0 2px 14px 2px rgba(0,0,0,0.33)"></div>
<div style="position:absolute;left:835px;top:206px;width:424px;height:30px;background:#fff"></div>
<span style="position:absolute;left:842.80px;top:215.00px;font:normal normal 11.70px/1 'Liberation Sans', sans-serif;color:#000;letter-spacing:0.374px;white-space:pre;">Font</span>
<span style="position:absolute;left:1187.95px;top:212.98px;font:normal normal 14.20px/1 'Liberation Sans', sans-serif;color:#000;letter-spacing:0.000px;white-space:pre;-webkit-text-stroke:0.35px #000;transform:scaleX(0.8238);transform-origin:0 0;">?</span>
<svg style="position:absolute;left:1228px;top:212px" width="16" height="16" viewBox="1228 212 16 16"><path d="M1230.9 215.1 L1241 225 M1241 215.1 L1230.9 225" stroke="#000" stroke-width="1.15"/></svg>
<div style="position:absolute;left:841.0px;top:264.0px;width:410.0px;height:411.0px;background:#fff;border:1px solid #d9d9d9;box-sizing:border-box;"></div>
<div style="position:absolute;left:843px;top:245.4px;width:51px;height:19.4px;box-sizing:border-box;border-top:1px solid #d9d9d9;background:#f0f0f0"></div>
<div style="position:absolute;left:893.3px;top:243.2px;width:71.4px;height:22.6px;box-sizing:border-box;border:1px solid #d9d9d9;border-bottom:none;background:#fff"></div>
<span style="position:absolute;left:857.20px;top:249.90px;font:normal normal 11.70px/1 'Liberation Sans', sans-serif;color:#000;letter-spacing:0.170px;white-space:pre;">Fo<u>n</u>t</span>
<span style="position:absolute;left:903.90px;top:249.00px;font:normal normal 11.70px/1 'Liberation Sans', sans-serif;color:#000;letter-spacing:-0.253px;white-space:pre;">Ad<u>v</u>anced</span>
<span style="position:absolute;left:850.10px;top:275.30px;font:normal normal 11.70px/1 'Liberation Sans', sans-serif;color:#000;letter-spacing:-0.225px;white-space:pre;">Character Spacing</span>
<div style="position:absolute;left:948.3px;top:280px;width:295.6px;height:1px;background:#dcdcdc"></div>
<span style="position:absolute;left:850.10px;top:414.90px;font:normal normal 11.70px/1 'Liberation Sans', sans-serif;color:#000;letter-spacing:-0.225px;white-space:pre;">OpenType Features</span>
<div style="position:absolute;left:954.8px;top:420px;width:289.1px;height:1px;background:#dcdcdc"></div>
<span style="position:absolute;left:850.10px;top:558.60px;font:normal normal 11.70px/1 'Liberation Sans', sans-serif;color:#000;letter-spacing:-0.412px;white-space:pre;">Preview</span>
<div style="position:absolute;left:894px;top:564px;width:349.9px;height:1px;background:#dcdcdc"></div>
<span style="position:absolute;left:859.10px;top:298.10px;font:normal normal 11.70px/1 'Liberation Sans', sans-serif;color:#000;letter-spacing:-0.709px;white-space:pre;">S<u>c</u>ale:</span>
<div style="position:absolute;left:913.0px;top:294.0px;width:152.0px;height:20.0px;background:#fff;border:1px solid #adadad;box-sizing:border-box;"></div>
<div style="position:absolute;left:1047.0px;top:294.0px;width:18.0px;height:20.0px;background:#e1e1e1;border:1.2px solid #a6a6a6;box-sizing:border-box;"></div>
<svg style="position:absolute;left:1050.1px;top:301.6px" width="10" height="6" viewBox="0 0 10 6"><path d="M1.2 0.8 L5 4.8 L8.8 0.8" fill="none" stroke="#444" stroke-width="1.05"/></svg>
<div style="position:absolute;left:916px;top:297.2px;width:27px;height:12.8px;background:#99c9ef"></div>
<span style="position:absolute;left:916.50px;top:298.10px;font:normal normal 11.70px/1 'Liberation Sans', sans-serif;color:#000;letter-spacing:-1.059px;white-space:pre;">100%</span>
<span style="position:absolute;left:858.70px;top:321.80px;font:normal normal 11.70px/1 'Liberation Sans', sans-serif;color:#000;letter-spacing:-0.213px;white-space:pre;"><u>S</u>pacing:</span>
<div style="position:absolute;left:913.0px;top:317.0px;width:152.0px;height:21.0px;background:#fff;border:1px solid #adadad;box-sizing:border-box;"></div>
<div style="position:absolute;left:1047.0px;top:317.0px;width:18.0px;height:21.0px;background:#e1e1e1;border:1.2px solid #a6a6a6;box-sizing:border-box;"></div>
<svg style="position:absolute;left:1050.1px;top:325.5px" width="10" height="6" viewBox="0 0 10 6"><path d="M1.2 0.8 L5 4.8 L8.8 0.8" fill="none" stroke="#444" stroke-width="1.05"/></svg>
<span style="position:absolute;left:917.00px;top:321.80px;font:normal normal 11.70px/1 'Liberation Sans', sans-serif;color:#000;letter-spacing:-0.122px;white-space:pre;">Normal</span>
<span style="position:absolute;left:858.70px;top:347.00px;font:normal normal 11.70px/1 'Liberation Sans', sans-serif;color:#000;letter-spacing:0.007px;white-space:pre;"><u>P</u>osition:</span>
<div style="position:absolute;left:913.0px;top:342.0px;width:76.0px;height:22.0px;background:#fff;border:1px solid #adadad;box-sizing:border-box;"></div>
<div style="position:absolute;left:971.0px;top:342.0px;width:18.0px;height:22.0px;background:#e1e1e1;border:1.2px solid #a6a6a6;box-sizing:border-box;"></div>
<svg style="position:absolute;left:974.3px;top:350.5px" width="10" height="6" viewBox="0 0 10 6"><path d="M1.2 0.8 L5 4.8 L8.8 0.8" fill="none" stroke="#444" stroke-width="1.05"/></svg>
<span style="position:absolute;left:917.00px;top:347.00px;font:normal normal 11.70px/1 'Liberation Sans', sans-serif;color:#000;letter-spacing:-0.122px;white-space:pre;">Normal</span>
<span style="position:absolute;left:1074.00px;top:321.80px;font:normal normal 11.70px/1 'Liberation Sans', sans-serif;color:#000;letter-spacing:-1.116px;white-space:pre;"><u>B</u>y:</span>
<div style="position:absolute;left:1097.0px;top:318.0px;width:77.0px;height:20.0px;background:#fff;border:1px solid #adadad;box-sizing:border-box;"></div>
<div style="position:absolute;left:1157.0px;top:320.0px;width:15.0px;height:8.0px;background:#e1e1e1;border:1px solid #c8c8c8;box-sizing:border-box;"></div>
<div style="position:absolute;left:1157.0px;top:329.0px;width:15.0px;height:7.0px;background:#e1e1e1;border:1px solid #c8c8c8;box-sizing:border-box;"></div>
<svg style="position:absolute;left:1160.5px;top:318.9px" width="8" height="16" viewBox="0 0 8 16"><path d="M1.1 5.6 L4 2.6 L6.9 5.6 Z M1.1 11 L4 14 L6.9 11 Z" fill="#000"/></svg>
<span style="position:absolute;left:1074.00px;top:347.00px;font:normal normal 11.70px/1 'Liberation Sans', sans-serif;color:#000;letter-spacing:-1.116px;white-space:pre;">B<u>y</u>:</span>
<div style="position:absolute;left:1097.0px;top:343.0px;width:77.0px;height:20.0px;background:#fff;border:1px solid #adadad;box-sizing:border-box;"></div>
<div style="position:absolute;left:1157.0px;top:345.0px;width:15.0px;height:8.0px;background:#e1e1e1;border:1px solid #c8c8c8;box-sizing:border-box;"></div>
<div style="position:absolute;left:1157.0px;top:354.0px;width:15.0px;height:7.0px;background:#e1e1e1;border:1px solid #c8c8c8;box-sizing:border-box;"></div>
<svg style="position:absolute;left:1160.5px;top:344.1px" width="8" height="16" viewBox="0 0 8 16"><path d="M1.1 5.6 L4 2.6 L6.9 5.6 Z M1.1 11 L4 14 L6.9 11 Z" fill="#000"/></svg>
<div style="position:absolute;left:859.0px;top:370.0px;width:13.0px;height:13.0px;background:#fff;border:1px solid #333;box-sizing:border-box;"></div>
<svg style="position:absolute;left:859px;top:370px" width="13" height="13" viewBox="0 0 13 13"><path d="M2.6 6.6 L5.3 9.4 L10.6 3.4" fill="none" stroke="#222" stroke-width="1.15"/></svg>
<span style="position:absolute;left:875.90px;top:370.70px;font:normal normal 11.70px/1 'Liberation Sans', sans-serif;color:#000;letter-spacing:0.113px;white-space:pre;"><u>K</u>erning for fonts:</span>
<div style="position:absolute;left:979.0px;top:367.0px;width:77.0px;height:20.0px;background:#fff;border:1px solid #adadad;box-sizing:border-box;"></div>
<div style="position:absolute;left:1039.0px;top:369.0px;width:15.0px;height:8.0px;background:#e1e1e1;border:1px solid #c8c8c8;box-sizing:border-box;"></div>
<div style="position:absolute;left:1039.0px;top:378.0px;width:15.0px;height:7.0px;background:#e1e1e1;border:1px solid #c8c8c8;box-sizing:border-box;"></div>
<svg style="position:absolute;left:1042.4px;top:368.0px" width="8" height="16" viewBox="0 0 8 16"><path d="M1.1 5.6 L4 2.6 L6.9 5.6 Z M1.1 11 L4 14 L6.9 11 Z" fill="#000"/></svg>
<span style="position:absolute;left:1064.70px;top:370.70px;font:normal normal 11.70px/1 'Liberation Sans', sans-serif;color:#000;letter-spacing:-0.054px;white-space:pre;">P<u>o</u>ints and above</span>
<span style="position:absolute;left:859.10px;top:439.00px;font:normal normal 11.70px/1 'Liberation Sans', sans-serif;color:#000;letter-spacing:-0.194px;white-space:pre;"><u>L</u>igatures:</span>
<div style="position:absolute;left:955.0px;top:434.0px;width:173.0px;height:22.0px;background:#fff;border:1px solid #adadad;box-sizing:border-box;"></div>
<div style="position:absolute;left:1110.0px;top:434.0px;width:18.0px;height:22.0px;background:#e1e1e1;border:1.2px solid #a6a6a6;box-sizing:border-box;"></div>
<svg style="position:absolute;left:1113.3px;top:442.5px" width="10" height="6" viewBox="0 0 10 6"><path d="M1.2 0.8 L5 4.8 L8.8 0.8" fill="none" stroke="#444" stroke-width="1.05"/></svg>
<span style="position:absolute;left:959.00px;top:439.00px;font:normal normal 11.70px/1 'Liberation Sans', sans-serif;color:#000;letter-spacing:0.008px;white-space:pre;">Standard and Contextual</span>
<span style="position:absolute;left:859.10px;top:463.90px;font:normal normal 11.70px/1 'Liberation Sans', sans-serif;color:#000;letter-spacing:-0.102px;white-space:pre;">Nu<u>m</u>ber spacing:</span>
<div style="position:absolute;left:955.0px;top:459.0px;width:173.0px;height:21.0px;background:#fff;border:1px solid #adadad;box-sizing:border-box;"></div>
<div style="position:absolute;left:1110.0px;top:459.0px;width:18.0px;height:21.0px;background:#e1e1e1;border:1.2px solid #a6a6a6;box-sizing:border-box;"></div>
<svg style="position:absolute;left:1113.3px;top:467.4px" width="10" height="6" viewBox="0 0 10 6"><path d="M1.2 0.8 L5 4.8 L8.8 0.8" fill="none" stroke="#444" stroke-width="1.05"/></svg>
<span style="position:absolute;left:959.00px;top:463.90px;font:normal normal 11.70px/1 'Liberation Sans', sans-serif;color:#000;letter-spacing:0.147px;white-space:pre;">Default</span>
<span style="position:absolute;left:859.10px;top:488.70px;font:normal normal 11.70px/1 'Liberation Sans', sans-serif;color:#000;letter-spacing:-0.128px;white-space:pre;">Number <u>f</u>orms:</span>
<div style="position:absolute;left:955.0px;top:484.0px;width:173.0px;height:22.0px;background:#fff;border:1px solid #adadad;box-sizing:border-box;"></div>
<div style="position:absolute;left:1110.0px;top:484.0px;width:18.0px;height:22.0px;background:#e1e1e1;border:1.2px solid #a6a6a6;box-sizing:border-box;"></div>
<svg style="position:absolute;left:1113.3px;top:492.5px" width="10" height="6" viewBox="0 0 10 6"><path d="M1.2 0.8 L5 4.8 L8.8 0.8" fill="none" stroke="#444" stroke-width="1.05"/></svg>
<span style="position:absolute;left:959.00px;top:488.70px;font:normal normal 11.70px/1 'Liberation Sans', sans-serif;color:#000;letter-spacing:0.147px;white-space:pre;">Default</span>
<span style="position:absolute;left:859.10px;top:514.10px;font:normal normal 11.70px/1 'Liberation Sans', sans-serif;color:#000;letter-spacing:-0.279px;white-space:pre;">St<u>y</u>listic sets:</span>
<div style="position:absolute;left:955.0px;top:509.0px;width:173.0px;height:21.0px;background:#fff;border:1px solid #adadad;box-sizing:border-box;"></div>
<div style="position:absolute;left:1110.0px;top:509.0px;width:18.0px;height:21.0px;background:#e1e1e1;border:1.2px solid #a6a6a6;box-sizing:border-box;"></div>
<svg style="position:absolute;left:1113.3px;top:517.4px" width="10" height="6" viewBox="0 0 10 6"><path d="M1.2 0.8 L5 4.8 L8.8 0.8" fill="none" stroke="#444" stroke-width="1.05"/></svg>
<span style="position:absolute;left:959.00px;top:514.10px;font:normal normal 11.70px/1 'Liberation Sans', sans-serif;color:#000;letter-spacing:0.147px;white-space:pre;">Default</span>
<div style="position:absolute;left:859.0px;top:535.0px;width:13.0px;height:13.0px;background:#fff;border:1px solid #0078d7;box-sizing:border-box;"></div>
<svg style="position:absolute;left:859px;top:535px" width="13" height="13" viewBox="0 0 13 13"><path d="M2.6 6.6 L5.3 9.4 L10.6 3.4" fill="none" stroke="#0078d7" stroke-width="1.2"/></svg>
<span style="position:absolute;left:875.90px;top:535.80px;font:normal normal 11.70px/1 'Liberation Sans', sans-serif;color:#000;letter-spacing:-0.079px;white-space:pre;">Use Contextual <u>A</u>lternates</span>
<div style="position:absolute;left:859.0px;top:578.0px;width:385.0px;height:41.0px;background:#fff;border:1px solid #4a4a4a;box-sizing:border-box;"></div>
<div style="position:absolute;left:861.2px;top:607px;width:31.6px;height:1px;background:#000"></div><div style="position:absolute;left:1210.3px;top:607px;width:31.6px;height:1px;background:#000"></div>
<span style="position:absolute;left:859.20px;top:622.90px;font:normal normal 11.70px/1 'Liberation Sans', sans-serif;color:#000;letter-spacing:-0.484px;white-space:pre;">This</span>
<span style="position:absolute;left:883.30px;top:622.90px;font:normal normal 11.70px/1 'Liberation Sans', sans-serif;color:#000;letter-spacing:0.231px;white-space:pre;">is</span>
<span style="position:absolute;left:894.20px;top:622.90px;font:normal normal 11.70px/1 'Liberation Sans', sans-serif;color:#000;letter-spacing:-0.116px;white-space:pre;">a</span>
<span style="position:absolute;left:902.70px;top:622.90px;font:normal normal 11.70px/1 'Liberation Sans', sans-serif;color:#000;letter-spacing:-0.258px;white-space:pre;">TrueType</span>
<span style="position:absolute;left:952.60px;top:622.90px;font:normal normal 11.70px/1 'Liberation Sans', sans-serif;color:#000;letter-spacing:0.522px;white-space:pre;">font.</span>
<span style="position:absolute;left:981.30px;top:622.90px;font:normal normal 11.70px/1 'Liberation Sans', sans-serif;color:#000;letter-spacing:-0.455px;white-space:pre;">This</span>
<span style="position:absolute;left:1004.70px;top:622.90px;font:normal normal 11.70px/1 'Liberation Sans', sans-serif;color:#000;letter-spacing:0.714px;white-space:pre;">font</span>
<span style="position:absolute;left:1030.10px;top:622.90px;font:normal normal 11.70px/1 'Liberation Sans', sans-serif;color:#000;letter-spacing:-0.267px;white-space:pre;">will</span>
<span style="position:absolute;left:1051.20px;top:622.90px;font:normal normal 11.70px/1 'Liberation Sans', sans-serif;color:#000;letter-spacing:-0.277px;white-space:pre;">be</span>
<span style="position:absolute;left:1067.50px;top:622.90px;font:normal normal 11.70px/1 'Liberation Sans', sans-serif;color:#000;letter-spacing:-0.503px;white-space:pre;">used</span>
<span style="position:absolute;left:1095.20px;top:622.90px;font:normal normal 11.70px/1 'Liberation Sans', sans-serif;color:#000;letter-spacing:-0.010px;white-space:pre;">on</span>
<span style="position:absolute;left:1111.90px;top:622.90px;font:normal normal 11.70px/1 'Liberation Sans', sans-serif;color:#000;letter-spacing:0.214px;white-space:pre;">both</span>
<span style="position:absolute;left:1139.90px;top:622.90px;font:normal normal 11.70px/1 'Liberation Sans', sans-serif;color:#000;letter-spacing:0.255px;white-space:pre;">printer</span>
<span style="position:absolute;left:1178.00px;top:622.90px;font:normal normal 11.70px/1 'Liberation Sans', sans-serif;color:#000;letter-spacing:-0.246px;white-space:pre;">and</span>
<span style="position:absolute;left:1200.60px;top:622.90px;font:normal normal 11.70px/1 'Liberation Sans', sans-serif;color:#000;letter-spacing:-0.312px;white-space:pre;">screen.</span>
<div style="position:absolute;left:841.0px;top:684.0px;width:89.0px;height:22.0px;background:#e1e1e1;border:1px solid #adadad;box-sizing:border-box;"></div>
<span style="position:absolute;left:848.80px;top:688.80px;font:normal normal 11.70px/1 'Liberation Sans', sans-serif;color:#000;letter-spacing:-0.117px;white-space:pre;">Set As <u>D</u>efault</span>
<div style="position:absolute;left:940.0px;top:684.0px;width:84.0px;height:22.0px;background:#e1e1e1;border:1px solid #adadad;box-sizing:border-box;"></div>
<span style="position:absolute;left:947.40px;top:688.80px;font:normal normal 11.70px/1 'Liberation Sans', sans-serif;color:#000;letter-spacing:-0.155px;white-space:pre;">Text <u>E</u>ffects...</span>
<div style="position:absolute;left:1094.0px;top:684.0px;width:74.0px;height:22.0px;background:#e1e1e1;border:2px solid #0078d7;box-sizing:border-box;"></div>
<span style="position:absolute;left:1122.90px;top:688.80px;font:normal normal 11.70px/1 'Liberation Sans', sans-serif;color:#000;letter-spacing:-0.994px;white-space:pre;">OK</span>
<div style="position:absolute;left:1178.0px;top:684.0px;width:74.0px;height:22.0px;background:#e1e1e1;border:1px solid #adadad;box-sizing:border-box;"></div>
<span style="position:absolute;left:1198.00px;top:688.80px;font:normal normal 11.70px/1 'Liberation Sans', sans-serif;color:#000;letter-spacing:-0.453px;white-space:pre;">Cancel</span>
<svg style="position:absolute;left:0;top:0" width="1285" height="769" viewBox="0 0 1285 769"><g fill="none" stroke="#000" stroke-width="1.15" stroke-linecap="round" stroke-linejoin="round"><path d="M930.49 580.56 C930.23 582.25 929.45 587.43 928.93 590.68 C928.41 593.92 927.37 597.63 927.37 600.02 C927.37 602.40 927.89 603.91 928.93 605.00 C929.97 606.09 931.78 606.73 933.60 606.55 C935.42 606.37 938.01 605.77 939.82 603.91 C941.64 602.04 943.33 599.24 944.49 595.35 C945.66 591.46 946.44 583.02 946.83 580.56"/><path d="M946.83 580.56 C946.52 582.51 945.43 588.73 944.96 592.23 C944.49 595.74 943.85 599.37 944.03 601.57 C944.21 603.78 945.01 604.68 946.05 605.46 C947.09 606.24 948.44 606.76 950.25 606.24 C952.07 605.72 954.92 604.68 956.95 602.35 C958.97 600.02 961.15 595.99 962.39 592.23 C963.64 588.47 964.08 581.86 964.42 579.78"/><path d="M974.53 591.92 C974.01 591.97 972.33 591.53 971.42 592.23 C970.51 592.93 969.60 594.70 969.09 596.12 C968.57 597.55 968.18 599.37 968.31 600.79 C968.44 602.22 969.09 603.78 969.86 604.68 C970.64 605.59 972.46 605.98 972.98 606.24"/><path d="M997.88 580.56 C997.62 582.25 996.89 587.05 996.32 590.68 C995.75 594.31 994.71 599.96 994.46 602.35 C994.20 604.74 994.46 604.35 994.77 605.00 C995.08 605.64 996.06 606.03 996.32 606.24"/><path d="M1010.64 592.23 C1009.99 592.49 1007.79 592.62 1006.75 593.79 C1005.71 594.96 1004.60 597.42 1004.42 599.24 C1004.23 601.05 1004.88 603.52 1005.66 604.68 C1006.44 605.85 1007.87 606.37 1009.09 606.24 C1010.30 606.11 1011.99 605.20 1012.98 603.91 C1013.96 602.61 1014.87 600.20 1015.00 598.46 C1015.13 596.72 1014.48 594.52 1013.75 593.48 C1013.03 592.44 1011.16 592.44 1010.64 592.23"/><path d="M1022.32 592.23 C1022.26 593.27 1021.93 596.51 1022.00 598.46 C1022.08 600.40 1022.21 602.61 1022.78 603.91 C1023.35 605.20 1024.21 606.24 1025.43 606.24 C1026.65 606.24 1028.80 605.20 1030.10 603.91 C1031.39 602.61 1032.56 600.40 1033.21 598.46 C1033.86 596.51 1033.86 593.27 1033.99 592.23"/><path d="M1048.00 591.92 C1047.43 592.03 1045.56 591.77 1044.57 592.54 C1043.59 593.32 1042.63 595.14 1042.08 596.59 C1041.54 598.04 1041.17 599.86 1041.30 601.26 C1041.43 602.66 1042.06 604.17 1042.86 605.00 C1043.66 605.83 1045.58 606.03 1046.13 606.24"/><path d="M1074.12 591.46 C1073.48 591.64 1071.32 591.64 1070.23 592.54 C1069.14 593.45 1068.16 595.40 1067.59 596.90 C1067.02 598.41 1066.68 600.22 1066.81 601.57 C1066.94 602.92 1067.54 604.17 1068.37 605.00 C1069.20 605.83 1071.22 606.29 1071.79 606.55"/><path d="M1083.46 592.23 C1083.28 593.40 1082.56 597.29 1082.37 599.24 C1082.19 601.18 1081.93 602.74 1082.37 603.91 C1082.81 605.07 1083.93 606.16 1085.02 606.24 C1086.11 606.32 1087.74 605.67 1088.91 604.37 C1090.08 603.08 1091.25 600.48 1092.02 598.46 C1092.80 596.44 1093.32 593.27 1093.58 592.23"/><path d="M1093.58 592.23 C1093.40 593.40 1092.67 597.29 1092.49 599.24 C1092.31 601.18 1092.13 602.69 1092.49 603.91 C1092.85 605.13 1094.31 606.11 1094.67 606.55"/><path d="M1102.14 591.92 C1102.58 592.23 1103.93 593.48 1104.79 593.79 C1105.64 594.10 1106.60 594.10 1107.28 593.79 C1107.95 593.48 1108.57 592.23 1108.83 591.92"/><path d="M1108.83 591.92 C1108.68 593.01 1108.16 596.46 1107.90 598.46 C1107.64 600.46 1107.02 602.56 1107.28 603.91 C1107.54 605.26 1109.09 606.11 1109.46 606.55"/><path d="M1123.15 592.23 C1123.20 593.27 1123.51 596.64 1123.46 598.46 C1123.41 600.27 1123.41 601.88 1122.84 603.13 C1122.27 604.37 1121.02 605.46 1120.04 605.93 C1119.05 606.40 1117.83 606.19 1116.93 605.93 C1116.02 605.67 1114.98 604.63 1114.59 604.37"/><path d="M1135.29 592.23 C1135.11 593.40 1134.46 597.29 1134.20 599.24 C1133.94 601.18 1133.50 602.69 1133.74 603.91 C1133.97 605.13 1135.29 606.11 1135.60 606.55"/><path d="M1143.39 592.23 C1143.33 593.27 1143.02 596.51 1143.07 598.46 C1143.13 600.40 1143.13 602.61 1143.70 603.91 C1144.27 605.20 1145.30 606.24 1146.50 606.24 C1147.69 606.24 1149.61 605.20 1150.86 603.91 C1152.10 602.61 1153.35 600.40 1153.97 598.46 C1154.59 596.51 1154.49 593.27 1154.59 592.23"/><path d="M1169.07 592.23 C1168.47 592.49 1166.45 592.75 1165.49 593.79 C1164.53 594.83 1163.70 596.90 1163.31 598.46 C1162.92 600.02 1162.84 601.88 1163.15 603.13 C1163.46 604.37 1164.45 605.41 1165.18 605.93 C1165.90 606.45 1167.12 606.19 1167.51 606.24"/><path d="M1170.16 588.34 C1170.05 588.99 1169.64 591.58 1169.53 592.23"/><path d="M1176.85 580.56 C1176.33 584.06 1174.25 598.07 1173.74 601.57"/></g><circle cx="1136.07" cy="586.01" r="0.9" fill="#000"/><circle cx="1173.42" cy="605.93" r="0.9" fill="#000"/>
<path d="M898.4 549.2 V565.4 L902.1 561.9 L905 568.3 L907.2 567.4 L904.4 561 L909.4 560.9 Z" fill="#fff" stroke="#222" stroke-width="1" stroke-linejoin="round"/>
<path d="M64.30 87.75 a99.80 20.55 0 1 0 199.60 0 a99.80 20.55 0 1 0 -199.60 0 Z M72.30 87.75 a91.80 14.75 0 1 0 183.60 0 a91.80 14.75 0 1 0 -183.60 0 Z" fill="#ed1c24" fill-rule="evenodd"/>
<path d="M346.10 154.90 a23.00 18.10 0 1 0 46.00 0 a23.00 18.10 0 1 0 -46.00 0 Z M351.20 154.90 a17.90 13.00 0 1 0 35.80 0 a17.90 13.00 0 1 0 -35.80 0 Z" fill="#ed1c24" fill-rule="evenodd"/>
<path d="M841.40 377.45 a74.00 23.35 0 1 0 148.00 0 a74.00 23.35 0 1 0 -148.00 0 Z M846.70 377.45 a68.70 18.75 0 1 0 137.40 0 a68.70 18.75 0 1 0 -137.40 0 Z" fill="#ed1c24" fill-rule="evenodd"/>
<path d="M835.30 543.25 a96.45 21.85 0 1 0 192.90 0 a96.45 21.85 0 1 0 -192.90 0 Z M841.50 543.25 a90.25 16.45 0 1 0 180.50 0 a90.25 16.45 0 1 0 -180.50 0 Z" fill="#ed1c24" fill-rule="evenodd"/>
<path d="M1071.10 694.35 a57.95 27.35 0 1 0 115.90 0 a57.95 27.35 0 1 0 -115.90 0 Z M1076.70 694.35 a52.35 21.85 0 1 0 104.70 0 a52.35 21.85 0 1 0 -104.70 0 Z" fill="#ed1c24" fill-rule="evenodd"/></svg>
<span style="position:absolute;left:59.20px;top:60.03px;font:normal bold 19.20px/1 'Liberation Serif', serif;color:#ed1c24;letter-spacing:0.000px;white-space:pre;transform:scaleX(0.9902);transform-origin:0 0;">1</span>
<span style="position:absolute;left:330.05px;top:144.94px;font:normal normal 18.50px/1 'Liberation Sans', sans-serif;color:#ed1c24;letter-spacing:0.000px;white-space:pre;-webkit-text-stroke:0.45px #ed1c24;transform:scaleX(1.0731);transform-origin:0 0;">2</span>
<span style="position:absolute;left:839.15px;top:350.44px;font:normal normal 18.50px/1 'Liberation Sans', sans-serif;color:#ed1c24;letter-spacing:0.000px;white-space:pre;-webkit-text-stroke:0.45px #ed1c24;transform:scaleX(1.0392);transform-origin:0 0;">3</span>
<span style="position:absolute;left:837.15px;top:513.24px;font:normal normal 18.50px/1 'Liberation Sans', sans-serif;color:#ed1c24;letter-spacing:0.000px;white-space:pre;-webkit-text-stroke:0.45px #ed1c24;transform:scaleX(1.0877);transform-origin:0 0;">4</span>
<span style="position:absolute;left:1062.35px;top:666.64px;font:normal normal 18.50px/1 'Liberation Sans', sans-serif;color:#ed1c24;letter-spacing:0.000px;white-space:pre;-webkit-text-stroke:0.45px #ed1c24;transform:scaleX(1.0440);transform-origin:0 0;">5</span>
<div style="position:absolute;left:0;top:0;width:1285px;height:1px;background:#8b867f"></div>
<div style="position:absolute;left:0;top:0;width:1px;height:35px;background:#8b867f"></div>
<div style="position:absolute;left:0;top:35px;width:1px;height:734px;background:#767676"></div>
</body></html>
